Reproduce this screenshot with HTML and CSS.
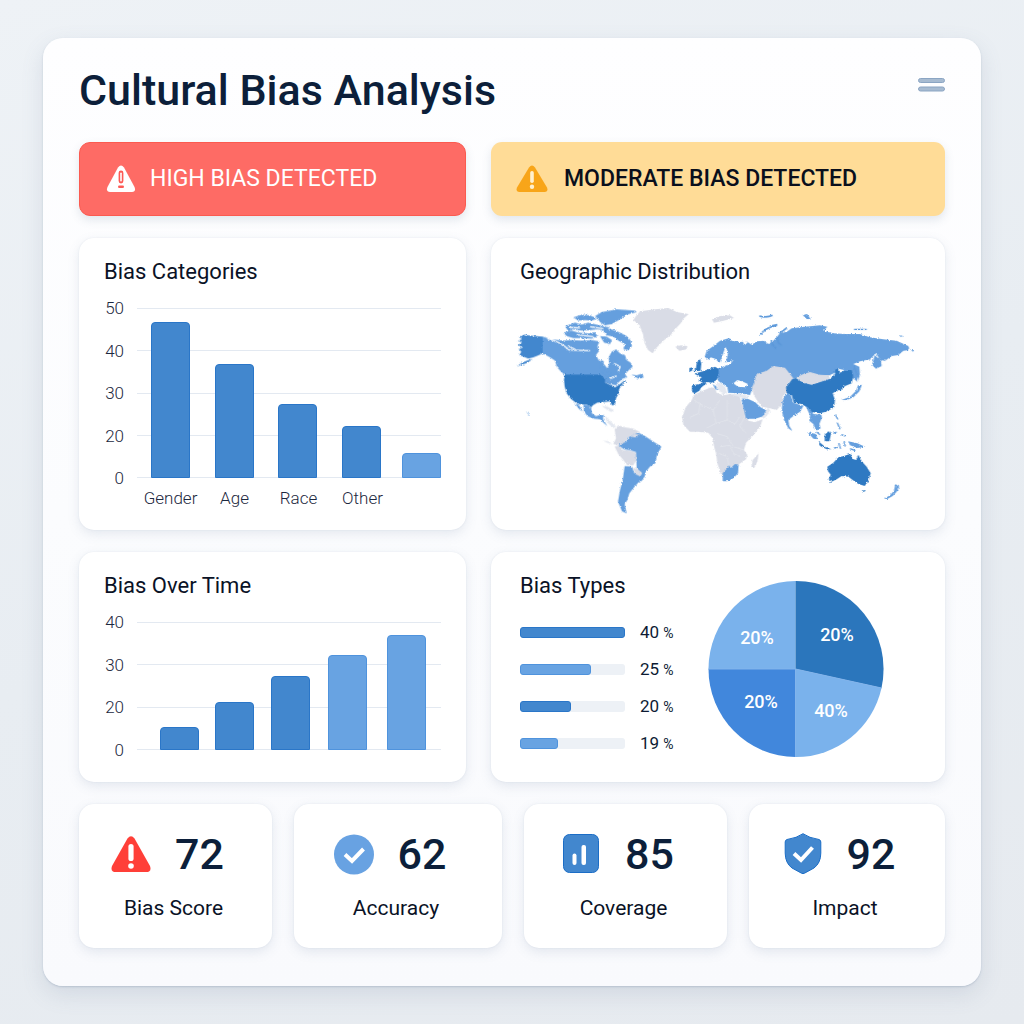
FILE: index.html
```html
<!DOCTYPE html>
<html lang="en">
<head>
<meta charset="utf-8">
<meta name="viewport" content="width=device-width, initial-scale=1">
<title>Cultural Bias Analysis</title>
<link rel="stylesheet" href="styles.css">
</head>
<body>
<main class="panel">
  <header class="header">
    <h1 class="title">Cultural Bias Analysis</h1>
    <button class="menu" type="button" aria-label="Menu">
      <svg width="27" height="14" viewBox="0 0 27 14"><rect x=".5" y=".5" width="26" height="4" rx="2"/><rect x=".5" y="9" width="26" height="4" rx="2"/></svg>
    </button>
  </header>

  <div class="columns">
    <div class="alert alert-high" role="status">
      <svg class="alert-icon" viewBox="0 0 32 28"><path fill="#fff" d="M13 2.600Q16-1.600 19 2.600L29.500 22Q31.300 27 27 27H5Q.7 27 2.500 22Z"/><rect x="13.600" y="5.500" width="4.800" height="13" rx="2.400" fill="#fd5a55"/><rect x="15.200" y="7.500" width="1.600" height="9" rx=".8" fill="#fff"/><rect x="13" y="20.500" width="6" height="2.600" rx="1.300" fill="#fd5a55"/></svg>
      <span>HIGH BIAS DETECTED</span>
    </div>
    <div class="alert alert-moderate" role="status">
      <svg class="alert-icon" viewBox="0 0 32 28"><path fill="#f8a519" d="M13 2.600Q16-1.600 19 2.600L31 22.500Q32.600 27 29 27H3Q-.6 27 1 22.500Z"/><rect x="14.200" y="6" width="3.600" height="12" rx="1.800" fill="#fff0cf"/><circle cx="16" cy="21.800" r="2.200" fill="#fff0cf"/></svg>
      <span>MODERATE BIAS DETECTED</span>
    </div>

    <section class="card">
      <h2 class="card-title">Bias Categories</h2>
      <div class="chart">
        <div class="axis"><span>50</span><span>40</span><span>30</span><span>20</span><span>0</span></div>
        <div class="plot">
          <div class="lines"><i></i><i></i><i></i><i></i><i></i></div>
          <div class="bars categories">
            <div class="bar" style="height:156px"></div>
            <div class="bar" style="height:114px"></div>
            <div class="bar" style="height:74px"></div>
            <div class="bar" style="height:52px"></div>
            <div class="bar light" style="height:25px"></div>
          </div>
        </div>
        <div class="names categories"><span>Gender</span><span>Age</span><span>Race</span><span>Other</span></div>
      </div>
    </section>

    <section class="card card-map">
      <h2 class="card-title">Geographic Distribution</h2>
      <svg class="map" viewBox="0 0 1260 660" role="img" aria-label="World map">
        <defs>
          <filter id="coast" x="0" y="0" width="100%" height="100%">
            <feTurbulence type="fractalNoise" baseFrequency="0.22" numOctaves="3" seed="4"/>
            <feDisplacementMap in="SourceGraphic" scale="8" xChannelSelector="R" yChannelSelector="G"/>
          </filter>
        </defs>
        <g filter="url(#coast)">
          <g>
            <path class="mid" d="M27 110L45 104 60 107 98 110V160L85 166 70 172 55 176 40 170 28 165 34 155 26 148 38 142 24 135 36 128 24 122 36 118ZM20 200L36 188 55 180 68 178 48 190 30 196Z"/>
            <path class="light" d="M98 110L125 118 160 122 185 120 215 122 245 120 268 124 262 140 268 152 258 165 266 180 280 190 292 205 298 190 296 172 305 155 318 148 330 160 345 165 350 180 362 188 368 200 355 212 345 222 352 232 338 236 325 248 318 256 300 252 285 248 280 236 268 226H165L150 212 140 200 135 182 120 172 98 160Z"/>
            <path class="light" d="M255 48L275 36 320 28 375 32 380 36 350 44 330 58 305 72 285 76 270 66 262 54ZM190 52L215 44 240 46 262 56 245 62 225 60 205 62ZM165 78L195 68 215 74 235 68 260 74 285 80 300 82 285 92 262 88 240 90 215 92 190 88 175 94ZM160 98L185 92 205 98 235 100 255 96 262 108 245 116 215 114 190 114 170 108ZM275 84L305 88 330 98 350 108 362 122 366 138 355 150 340 148 345 132 325 122 310 110 290 106ZM270 108L290 110 306 120 300 132 282 128ZM364 224L380 226 396 221 402 232 385 236ZM272 180L282 184 278 200 290 215 304 220 296 232 282 222 270 205Z"/>
            <path class="gap" d="M112 116Q150 124 178 150L240 152M174 138L196 148M200 104L250 110M178 82L210 84M240 80L280 86M312 190L330 200 325 215M300 235L320 228"/>
            <path class="dark" d="M164 224H270L285 236V248L300 254 315 262 330 252 345 240 348 244 335 256 328 266 326 280 318 295 315 314 306 316 300 304 280 306 262 308 248 316 244 322 230 314 205 312 192 304 182 296 170 280 164 260 162 240Z"/>
            <path class="light" d="M220 314L232 315 244 324 246 340 258 348 275 344 282 346 278 356 292 378 280 368 270 358 250 356 232 348 222 334ZM196 312L206 314 218 334 208 328ZM48 334L58 340 58 346Z"/>
            <path class="faint" d="M276 318L292 320 312 330 304 336 286 326ZM284 346L306 368 318 380 310 384 290 366ZM278 422L296 424 306 432 290 428Z"/>
            <path class="none" d="M314 388L325 376 345 382 370 386 390 396 372 404 355 412 350 422 340 432 325 436 310 432 318 415ZM314 440L328 436 338 450 360 452 378 458 380 478 370 496 352 496 340 480 325 462Z"/>
            <path class="light" d="M326 436L350 424 358 410 385 398 405 408 430 425 454 440 448 452 440 468 436 490 420 500 408 515 404 530 392 545 386 534 396 520 380 505 378 456 360 450 342 448Z"/>
            <path class="light" d="M344 498L366 500 372 518 392 530 398 540 385 548 372 562 358 580 352 600 344 612 350 640 336 634 324 605 330 570 338 540Z"/>
            <path class="none" d="M368 502L382 508 396 518 390 528 376 522ZM360 410L374 402 390 404 376 412Z"/>
          </g>
          <g transform="translate(390)">
            <path class="none" d="M-12 48L0 34 45 28 85 24 110 36 146 42 130 56 122 70 108 85 92 105 70 122 48 145 38 160 24 150 14 130 8 100-2 75-20 60ZM106 140L122 136 142 138 140 148 118 152ZM216 58L240 48 270 46 282 54 250 62 222 68Z"/>
            <path class="none" d="M162 284L185 274 212 262 225 264 230 278 250 286 270 282 298 286 305 310 318 340 325 362 345 366 368 358 360 380 340 405 318 428 312 450 322 465 318 478 298 492 290 500 270 500 255 520 246 530 240 515 232 490 228 460 222 440 218 415 205 398 175 395 150 395 130 375 126 350 138 320 155 300ZM334 500L338 480 356 460 352 485 342 505Z"/>
            <path class="border" d="M162 300L180 312 176 340 150 352M180 312L220 330 240 300M220 330L228 370 200 384M228 370L262 360 285 372 300 350M262 360V300M230 400L262 410 280 440 312 450M240 440L270 436 280 460 300 470M236 460L262 470 266 496M318 340L300 380 318 400"/>
            <path class="light" d="M194 170L200 152 220 138 240 122 268 114 275 122 300 126 320 124 335 134 350 124 372 122 385 132 400 122 420 100 440 95 455 85 480 82 540 76 562 80 550 92 580 100 615 102 660 102 690 112 730 118 770 122 805 138 808 150 790 152 775 165 755 168 735 182 720 180 708 160 690 178 660 184 640 192 658 200 660 225 652 245 640 235 630 214 595 206 585 218 568 226 540 226 505 220 470 234 455 238 440 212 410 206 390 214 350 228 344 245 338 262 330 285 300 280 265 278 262 262 236 244 230 225 235 205 270 192 280 180 262 186 246 190 250 172 262 150 252 155 246 172 238 188 226 176 212 172 206 180Z"/>
            <path class="sea" d="M280 250L292 240 306 244 324 252 316 262 294 260ZM256 140L264 160 258 186 246 194 248 166ZM306 120L314 136 324 126Z"/>
            <path class="dark" d="M188 214L225 200 236 206V225L230 240 215 248 200 246 190 250 175 240 185 232 164 222 172 218ZM156 256L178 252 190 248 200 250 184 262 178 272 165 280 156 276ZM170 188L180 176 184 190 182 212 160 214 168 204ZM148 204L158 202 156 212 148 215Z"/>
            <path class="light" d="M218 252L228 258 236 270 226 268ZM304 296L318 294 345 306 362 322 384 334 372 348 345 356 318 356 312 330ZM248 520L262 505 268 496 272 504 285 492 296 494 294 520 280 535 262 544 248 544Z"/>
            <path class="faint" d="M228 250L240 248 256 262 262 280 248 284 236 268ZM262 282L300 282 326 288 320 298 296 290ZM384 322L366 352 372 356 392 334Z"/>
            <path class="none" d="M342 250L350 222 380 212 400 198 435 203 460 235 445 250 440 275 428 290V310L410 330 390 325 366 320 350 300 340 282 336 262Z"/>
            <path class="isle" d="M362 104Q375 82 410 76M358 48Q380 54 398 46M390 78L412 74M394 120Q396 138 408 144M412 108Q410 128 424 136M418 100L440 84"/>
          </g>
          <g transform="translate(780)">
            <path class="none" d="M78 232L100 222 120 216 150 224 180 226 178 236 150 246 125 254 100 248Z"/>
            <path class="dark" d="M48 262L66 238 78 234 100 248 125 254 150 246 180 236 195 222V210L203 204 210 218 225 210 245 210 250 230 245 250 225 258 215 268 200 272 188 280 195 300 192 322 172 334 150 340 125 336 115 325 95 312 72 308 65 285 50 280Z"/>
            <path class="light" d="M38 300L50 278 62 285 70 308 100 318 90 335 70 348 55 360 58 378 68 394 55 385 42 360 35 330ZM106 316L118 326 130 342 154 344 156 352 148 372 152 385 138 392 130 372 118 362 120 346ZM112 396L138 402 142 418 130 416ZM234 424L262 430 285 440 262 444 240 436ZM214 300L240 290 258 272 264 256 276 254 268 274 250 292 230 300ZM306 194L314 166 332 180 335 198 318 206ZM98 44L112 42 122 58 108 56ZM342 596L360 586 372 572 376 552 388 560 380 575 368 588 352 597ZM388 106L400 108 392 111ZM424 150L434 150 428 155Z"/>
            <path class="dark" d="M164 404L175 394 184 398 178 424 164 424ZM145 424L165 440 184 448 170 448 150 438ZM205 258L216 262 212 272 204 268ZM275 572L288 570 282 576ZM178 546L184 546 180 550Z"/>
            <path class="dark" d="M172 500L190 488 205 472 222 468 232 464 242 462 246 476 258 480 265 464 275 484 290 500 302 520 294 545 284 558 265 552 248 540 235 530 215 528 200 538 185 545 176 538 182 524 174 514Z"/>
            <path class="isle thin" d="M252 88H290M196 344L204 358M202 368L210 388M190 400L200 396M192 444L204 442M206 430L212 446M222 424L226 440M240 446L256 452M214 404L226 408M252 200L262 226M140 396L150 404"/>
          </g>
        </g>
      </svg>
    </section>

    <section class="card">
      <h2 class="card-title">Bias Over Time</h2>
      <div class="chart">
        <div class="axis"><span>40</span><span>30</span><span>20</span><span>0</span></div>
        <div class="plot plot-short">
          <div class="lines"><i></i><i></i><i></i><i></i></div>
          <div class="bars timeline">
            <div class="bar" style="height:23px"></div>
            <div class="bar" style="height:48px"></div>
            <div class="bar" style="height:74px"></div>
            <div class="bar light" style="height:95px"></div>
            <div class="bar light" style="height:115px"></div>
          </div>
        </div>
      </div>
    </section>

    <section class="card card-types">
      <div class="types">
        <h2 class="card-title">Bias Types</h2>
        <ul class="type-list">
          <li><span class="track"><span class="fill" style="width:100%"></span></span><span>40 <small>%</small></span></li>
          <li><span class="track"><span class="fill light" style="width:68%"></span></span><span>25 <small>%</small></span></li>
          <li><span class="track"><span class="fill" style="width:49%"></span></span><span>20 <small>%</small></span></li>
          <li><span class="track"><span class="fill light" style="width:36%"></span></span><span>19 <small>%</small></span></li>
        </ul>
      </div>
      <svg class="pie" viewBox="0 0 176 178" role="img" aria-label="Bias types by share">
        <path fill="#7ab2ec" d="M87.500 89V1A87.500 88 0 0 0 .5 89Z"/>
        <path fill="#4187dc" d="M87.500 89H.5A87.500 88 0 0 0 87.500 177Z"/>
        <path fill="#7ab2ec" d="M87.500 89V177A87.500 88 0 0 0 173.500 108Z"/>
        <path fill="#2b76bc" d="M87.500 89L173.500 108A87.500 88 0 0 0 87.500 1Z"/>
        <path class="pie-edge" d="M87.500 89V177M.5 89H87.500L173.500 108"/>
        <g class="pie-text"><text x="49" y="64">20%</text><text x="129" y="61">20%</text><text x="53" y="128">20%</text><text x="123" y="137">40%</text></g>
      </svg>
    </section>
  </div>

  <div class="stats">
    <section class="card stat">
      <div class="stat-row">
        <svg class="stat-icon" viewBox="0 0 40 42"><path fill="#ff3f38" d="M16.500 5.500Q20 .8 23.500 5.500L39 33Q41 39 35 39H5Q-1 39 1 33Z"/><rect x="17.400" y="11" width="5.200" height="17" rx="2.600" fill="#fff"/><circle cx="20" cy="33" r="2.800" fill="#fff"/></svg>
        <strong>72</strong>
      </div>
      <span>Bias Score</span>
    </section>
    <section class="card stat">
      <div class="stat-row">
        <svg class="stat-icon" viewBox="0 0 40 42"><circle cx="20" cy="21.500" r="20" fill="#68a2e2"/><path class="check" d="M11 21.500L18 28 29.500 16"/></svg>
        <strong>62</strong>
      </div>
      <span>Accuracy</span>
    </section>
    <section class="card stat">
      <div class="stat-row">
        <svg class="stat-icon" viewBox="0 0 40 42"><rect x="2.500" y="1.500" width="35" height="38" rx="6" fill="#4287ce" stroke="#1b6dc6"/><rect x="11.500" y="20.500" width="4" height="11.500" rx="2" fill="#fff"/><rect x="20.500" y="12" width="4.500" height="20" rx="2" fill="#fff"/></svg>
        <strong>85</strong>
      </div>
      <span>Coverage</span>
    </section>
    <section class="card stat">
      <div class="stat-row">
        <svg class="stat-icon" viewBox="0 0 40 42"><path fill="#4287ce" stroke="#1b6dc6" d="M20 .7Q26 5 36 6.500Q37.800 7 37.800 9V20Q37.800 30 31 35L21.500 40.200Q20 41 18.500 40.200L9 35Q2.200 30 2.200 20V9Q2.200 7 4 6.500Q14 5 20 .7Z"/><path class="check" d="M11 20.500L18 27 29.500 14.500"/></svg>
        <strong>92</strong>
      </div>
      <span>Impact</span>
    </section>
  </div>
</main>
</body>
</html>
```
FILE: styles.css
```css
* { box-sizing: border-box; }

body {
  margin: 0;
  padding: 38px 43px;
  min-height: 100vh;
  font-family: Roboto, "Liberation Sans", sans-serif;
  color: #0d1b33;
  background: linear-gradient(160deg, #eef2f6 0%, #e8edf2 50%, #e6eaef 100%);
}

h1, h2, ul { margin: 0; padding: 0; font-weight: 400; }

.panel {
  padding: 24px 36px 38px;
  border-radius: 20px;
  background: linear-gradient(180deg, #fefeff 0%, #fbfcfe 50%, #f9fafd 100%);
  box-shadow: 0 1px 2px rgba(120, 140, 165, .35), 0 8px 22px rgba(100, 120, 150, .16);
}

.header {
  display: flex;
  justify-content: space-between;
  align-items: flex-start;
  margin-bottom: 24px;
}

.title {
  font-size: 43px;
  line-height: 56px;
  font-weight: 500;
  color: #0c1f3a;
}

.menu {
  display: flex;
  align-items: center;
  height: 46px;
  padding: 0;
  border: 0;
  background: none;
}

.menu svg { fill: #a7bbd1; stroke: #8ba5c3; }

.columns {
  display: grid;
  grid-template-columns: 387fr 454fr;
  gap: 22px 25px;
}

.alert {
  display: flex;
  align-items: center;
  gap: 13px;
  height: 74px;
  padding: 0 25px;
  border-radius: 11px;
  font-size: 23px;
  line-height: 28px;
  box-shadow: 0 4px 10px rgba(90, 110, 140, .16);
}

.alert-icon { width: 32px; height: 28px; flex: none; }
.alert-high { color: #fff; background: #fe6b65; border: 1px solid #fb5a50; }
.alert-moderate { gap: 16px; color: #0a0f1c; background: #ffdc97; font-weight: 500; }

.card {
  padding: 20px 25px 22px;
  border-radius: 15px;
  background: #fff;
  box-shadow: 0 0 2px rgba(120, 140, 170, .14), 0 4px 12px rgba(100, 120, 155, .15);
}

.card-title { font-size: 22px; line-height: 28px; color: #0a1226; }

.chart {
  display: grid;
  grid-template-columns: 20px minmax(0, 1fr);
  column-gap: 13px;
  margin-top: 12px;
}

.axis {
  display: flex;
  flex-direction: column;
  justify-content: space-between;
  text-align: right;
  font-size: 17px;
  line-height: 20px;
  color: #1c2840;
}

.plot { display: grid; height: 170px; margin: 10px 0; }
.plot-short { height: 128px; }
.lines, .bars { grid-area: 1 / 1; }
.lines { display: flex; flex-direction: column; justify-content: space-between; }
.lines i { height: 1px; background: #e3e9f1; }

.bars { display: grid; align-items: end; }
.categories { display: grid; grid-template-columns: 64fr 64fr 64fr 60fr 38fr; padding-left: 14px; }
.timeline { grid-template-columns: 55fr 56fr 57fr 59fr 38fr; padding: 0 15px 0 23px; }

.bar {
  width: 39px;
  border: 1px solid #2a76c8;
  border-radius: 4px 4px 0 0;
  background: #4287ce;
}

.bar.light, .fill.light { background: #68a3e2; border-color: #4f93dd; }

.names { grid-column: 2; font-size: 17px; line-height: 20px; color: #1c2840; }
.names span { display: flex; justify-content: center; width: 39px; }
.axis, .names { font-weight: 300; }

.card-map { padding: 20px 15px 10px 19px; }
.card-map .card-title { padding-left: 10px; }
.map { display: block; width: 100%; margin-top: 14px; }
.map .light { fill: #659fde; }
.map .mid { fill: #4287ce; }
.map .dark { fill: #2f79c2; }
.map .none { fill: #d9dce6; }
.map .faint { fill: #e4e8f0; }
.map .sea { fill: #fff; }
.map .gap { fill: none; stroke: #fff; stroke-width: 4; }
.map .border { fill: none; stroke: #e6e8ef; stroke-width: 2; }
.map .isle { fill: none; stroke: #5b98da; stroke-width: 5; }
.map .thin { stroke-width: 4; }

.card-types { display: flex; gap: 32px; padding: 20px 61px 20px 29px; }
.types { flex: 1; }
.type-list { display: grid; gap: 17px; margin-top: 22px; list-style: none; }
.type-list li {
  display: grid;
  grid-template-columns: minmax(0, 1fr) 36px;
  gap: 15px;
  align-items: center;
  height: 20px;
  font-size: 17px;
  line-height: 20px;
  white-space: nowrap;
}
.type-list small { font-size: 14px; line-height: 14px; }

.track { height: 11px; border-radius: 3px; background: #edf1f6; }
.fill { display: block; height: 100%; border: 1px solid #2a76c8; border-radius: 3px; background: #4287ce; }

.pie { width: 176px; height: 178px; flex: none; margin-top: 8px; }
.pie-edge { fill: none; stroke: #82b4ec; stroke-width: 1; }
.pie-text { fill: #fff; font-size: 18px; font-weight: 500; text-anchor: middle; }

.stats {
  display: grid;
  grid-template-columns: 193fr 208fr 203fr 196fr;
  gap: 22px;
  margin-top: 22px;
}

.stat {
  display: flex;
  flex-direction: column;
  align-items: center;
  gap: 14px;
  padding: 24px 20px 26px 16px;
  font-size: 21px;
  line-height: 28px;
  color: #0a1226;
}

.stat-row { display: flex; align-items: center; gap: 24px; padding-right: 12px; }
.stat-row strong { font-size: 43px; line-height: 52px; font-weight: 500; color: #0c1f3a; }
.stat-icon { width: 40px; height: 42px; }
.check { fill: none; stroke: #fff; stroke-width: 4; }
```
